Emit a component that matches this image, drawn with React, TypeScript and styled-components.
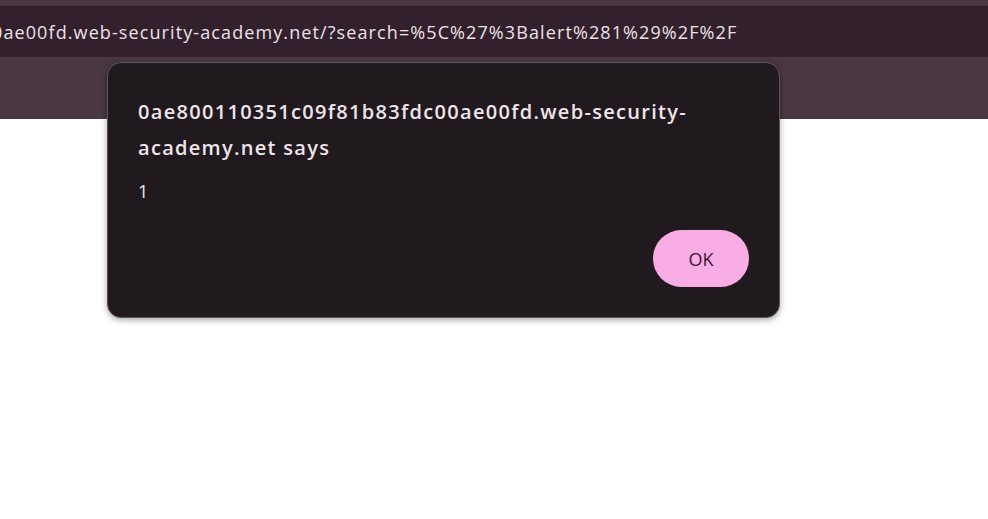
import React from 'react';
import styled, { createGlobalStyle } from 'styled-components';

const GlobalStyle = createGlobalStyle`
    html, body {
        margin: 0;
        padding: 0;
        background: #ffffff;
        font-family: "Open Sans", "Noto Sans", "Liberation Sans", sans-serif;
    }
`;

const Page = styled.div`
    position: relative;
    width: 988px;
    height: 519px;
    overflow: hidden;
    background: #ffffff;
`;

const Chrome = styled.div`
    display: flex;
    flex-direction: column;
    background: #4a3744;
    padding-top: 6px;
    height: 119px;
    box-sizing: border-box;
`;

const AddressBar = styled.div`
    height: 51px;
    background: #33202d;
    display: flex;
    align-items: center;
    overflow: hidden;
    white-space: nowrap;
`;

const Url = styled.span`
    margin-left: -8px;
    color: #ece2e8;
    font-size: 18px;
    letter-spacing: 1.1px;
    font-family: "Open Sans", "Noto Sans", sans-serif;
`;

// the js alert box lies over the page
const Dialog = styled.div`
    position: absolute;
    left: 107px;
    top: 62px;
    width: 673px;
    height: 256px;
    box-sizing: border-box;
    background: #201a1e;
    border: 1px solid #5e565b;
    border-radius: 14px;
    box-shadow: 0 2px 6px rgba(0, 0, 0, 0.35);
    padding: 31px 30px 0 30px;
    display: flex;
    flex-direction: column;
    font-family: "Open Sans", "Noto Sans", sans-serif;
`;

const Title = styled.div`
    color: #efe4ea;
    font-size: 20px;
    font-weight: 600;
    line-height: 36px;
    letter-spacing: 1.3px;
    width: 570px;
`;

const Message = styled.div`
    color: #efe4ea;
    font-size: 18px;
    margin-top: 14px;
    line-height: 22px;
`;

const Actions = styled.div`
    display: flex;
    justify-content: flex-end;
    margin-top: 28px;
`;

const OkButton = styled.button`
    width: 96px;
    height: 57px;
    border: none;
    border-radius: 29px;
    background: #f8ade4;
    color: #3c1733;
    font-size: 18px;
    font-family: "Open Sans", "Noto Sans", sans-serif;
    cursor: pointer;
`;

export default function App() {
    return (
        <Page>
            <GlobalStyle />
            <Chrome>
                <AddressBar>
                    <Url>0ae00fd.web-security-academy.net/?search=%5C%27%3Balert%281%29%2F%2F</Url>
                </AddressBar>
            </Chrome>
            <Dialog>
                <Title>0ae800110351c09f81b83fdc00ae00fd.web-security-academy.net says</Title>
                <Message>1</Message>
                <Actions>
                    <OkButton>OK</OkButton>
                </Actions>
            </Dialog>
        </Page>
    );
}
